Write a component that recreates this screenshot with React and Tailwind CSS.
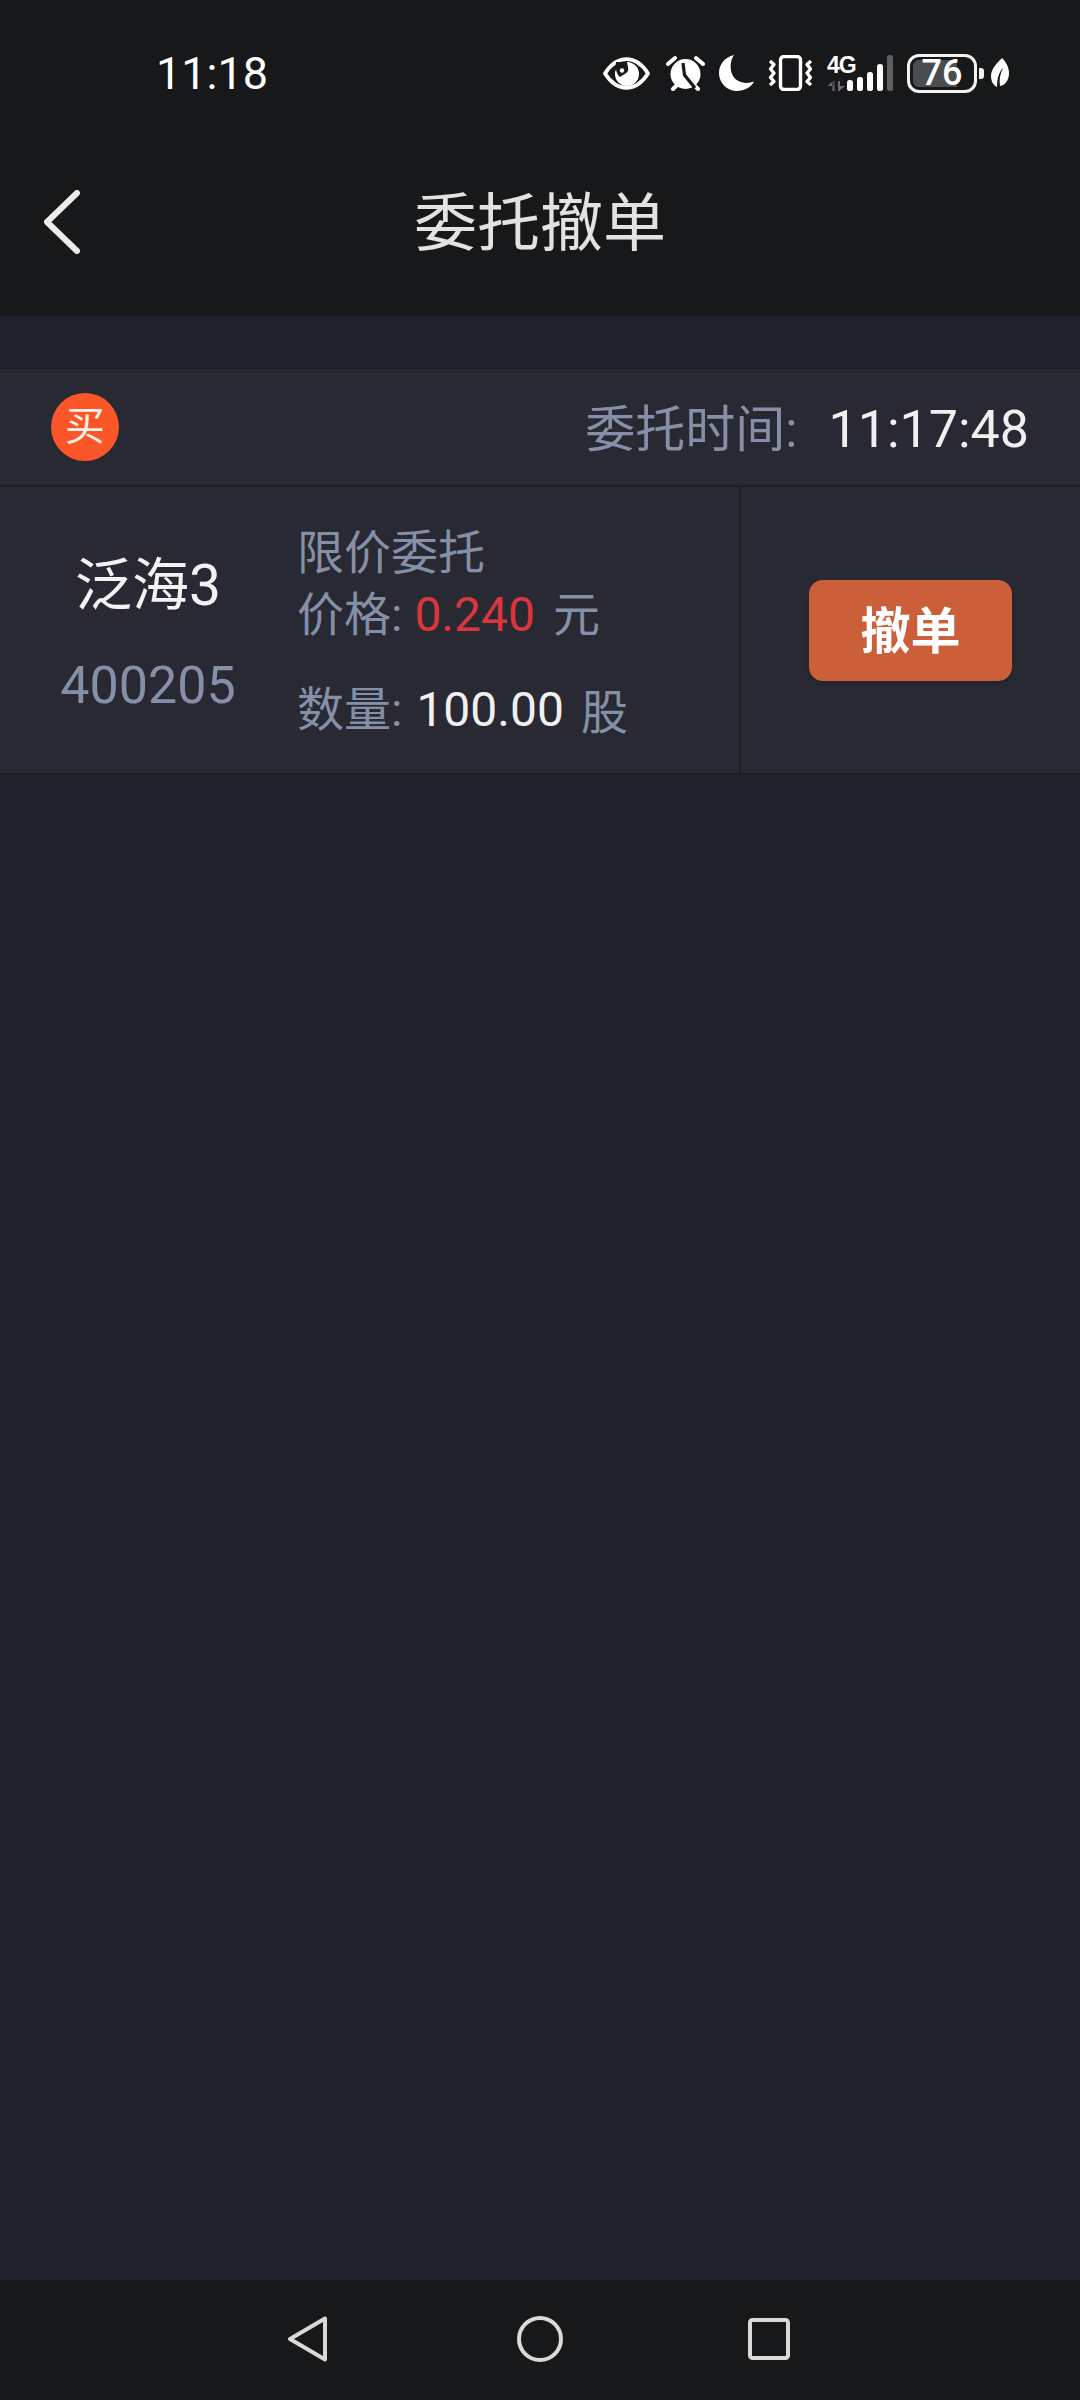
const FONT = "font-['Roboto','Noto_Sans_CJK_SC',sans-serif]";

function Eye() {
  return (
    <svg width="47" height="33" viewBox="0 0 47 33" className="shrink-0 mr-[2px]">
      <path d="M2 16.5 C8 7 15 2.2 23.5 2.2 C32 2.2 39 7 45 16.5 C39 26 32 30.8 23.5 30.8 C15 30.8 8 26 2 16.5 Z" fill="none" stroke="#fff" strokeWidth="3.8" strokeLinejoin="round" />
      <circle cx="24" cy="17" r="12" fill="#fff" />
      <path d="M13 5 H24 C24.5 9 26 12 25 14 C23 17 19 18 17 20 C14 18 12 12 13 5 Z" fill="#17181a" />
      <circle cx="19" cy="13.5" r="2.2" fill="#fff" />
      <path d="M5 14.5 C10 7 16 3.5 23.5 3.5 C31 3.5 37 7 42 14.5" fill="none" stroke="#fff" strokeWidth="0" />
    </svg>
  );
}

function Alarm() {
  return (
    <svg width="39" height="36" viewBox="0 0 39 36" className="shrink-0">
      <circle cx="19.5" cy="19" r="15" fill="#fff" />
      <path d="M2 9 L9 3 M37 9 L30 3" stroke="#fff" strokeWidth="4" strokeLinecap="round" />
      <path d="M7 34 L11 30 M32 34 L28 30" stroke="#fff" strokeWidth="4" strokeLinecap="round" />
      <path d="M17 8 L18.5 20 L29 33" fill="none" stroke="#17181a" strokeWidth="3.2" />
    </svg>
  );
}

function Moon() {
  return (
    <svg width="35" height="36" viewBox="0 0 35 36" className="shrink-0">
      <path d="M15 0 C9 9 11 24 22 27 C27 28.5 31 28 35 26.5 C32 32.5 25 36 18 36 C8 36 0 28 0 18 C0 9 6 2 15 0 Z" fill="#fff" />
    </svg>
  );
}

function Vibrate() {
  return (
    <svg width="45" height="36" viewBox="0 0 45 36" className="shrink-0">
      <rect x="12.5" y="1.5" width="20" height="33" rx="3.5" fill="none" stroke="#fff" strokeWidth="3.4" />
      <path d="M2 6 L6 9.5 L2.5 14 L6 18 L2.5 22.5 L6 26.5 L2 30" fill="none" stroke="#fff" strokeWidth="3.4" strokeLinejoin="round" />
      <path d="M43 6 L39 9.5 L42.5 14 L39 18 L42.5 22.5 L39 26.5 L43 30" fill="none" stroke="#fff" strokeWidth="3.4" strokeLinejoin="round" />
    </svg>
  );
}

function Signal() {
  return (
    <div className="relative w-[66px] h-[36px] shrink-0">
      <svg width="66" height="36" viewBox="0 0 66 36">
        <path d="M5.5 26 L5.5 36 H7.5 V26 Z M0.5 31 L6.5 25.5 V31 Z" fill="#6a6b6d" />
        <path d="M11 26 V36 H13 V26 Z M12 36 L18 31 H12 Z" fill="#6a6b6d" />
        <rect x="20" y="25" width="6" height="11" rx="2.5" fill="#fff" />
        <rect x="30" y="22" width="6" height="14" rx="2.5" fill="#fff" />
        <rect x="40" y="17" width="6" height="19" rx="2.5" fill="#fff" />
        <rect x="50" y="9" width="6" height="27" rx="2.5" fill="#fff" />
        <rect x="60" y="0" width="6" height="36" rx="2.5" fill="#5f6062" />
      </svg>
      <span className="absolute left-0 top-[-2px] text-[23px] leading-[24px] font-bold text-white font-['Liberation_Sans','Roboto',sans-serif] tracking-[-1px]">4G</span>
    </div>
  );
}

function Battery() {
  return (
    <div className="flex items-center gap-[2px] shrink-0">
      <div className="relative w-[70px] h-[39px] border-[3px] border-[#f2f2f2] rounded-[12px] p-[3px]">
        <div className="h-full w-[76%] bg-[#4b4c4e] rounded-l-[6px]" />
        <span className="absolute inset-0 flex items-center justify-center text-[36px] leading-none font-medium text-white">76</span>
      </div>
      <div className="w-[5px] h-[11px] bg-[#f2f2f2] rounded-r-[3px]" />
    </div>
  );
}

function Leaf() {
  return (
    <svg width="18" height="30" viewBox="0 0 18 30" className="shrink-0 -ml-[7px]">
      <path d="M11 0 C15 4 18 9 18 15 C18 21 15 27 9 28 C8 22 9 16 12 10 C8 14 6 20 6 29 C2 27 0 23 0 18 C0 11 6 5 11 0 Z" fill="#fff" />
    </svg>
  );
}

function BackChevron() {
  return (
    <svg width="38" height="64" viewBox="0 0 38 64" className="shrink-0">
      <path d="M34 3 L4 32 L34 61" fill="none" stroke="#ececec" strokeWidth="6" strokeLinecap="round" strokeLinejoin="round" />
    </svg>
  );
}

function NavBar() {
  return (
    <div className="h-[120px] bg-[#17181a] flex items-center justify-center pb-[3px] pr-[3px]">
      <svg width="42" height="46" viewBox="0 0 42 46">
        <path d="M3 23 L38 2.5 V43.5 Z" fill="none" stroke="#d9d9d9" strokeWidth="4" strokeLinejoin="round" />
      </svg>
      <svg width="46" height="46" viewBox="0 0 46 46" className="ml-[188px]">
        <circle cx="23" cy="23" r="21" fill="none" stroke="#d9d9d9" strokeWidth="4" />
      </svg>
      <svg width="42" height="42" viewBox="0 0 42 42" className="ml-[185px]">
        <rect x="2" y="2" width="38" height="38" rx="2.5" fill="none" stroke="#d9d9d9" strokeWidth="4" />
      </svg>
    </div>
  );
}

export default function App() {
  return (
    <div className={`${FONT} w-[1080px] h-[2400px] flex flex-col bg-[#20212b] overflow-hidden`}>
      <header className="h-[316px] shrink-0 bg-[#17181a] flex flex-col">
        <div className="h-[146px] flex items-center justify-between pl-[156px] pr-[71px]">
          <span className="text-[45px] leading-none text-white">11:18</span>
          <div className="flex items-center gap-[14px]">
            <Eye />
            <Alarm />
            <Moon />
            <Vibrate />
            <Signal />
            <Battery />
            <Leaf />
          </div>
        </div>
        <div className="relative flex items-center justify-center h-[150px] mt-[2px]">
          <div className="absolute left-[43px] top-[42px]"><BackChevron /></div>
          <h1 className="text-[63px] leading-none font-normal text-[#e2e2e2]">委托撤单</h1>
        </div>
      </header>

      <main className="flex-1 pt-[52px]">
        <section className="bg-[#282933] border-y border-[#1c1d25]">
          <div className="h-[118px] flex items-center justify-between pl-[51px] pr-[51px] border-b-2 border-[#1c1d25]">
            <span className="w-[68px] h-[68px] rounded-full bg-[#fa5628] flex items-center justify-center text-[40px] leading-none text-[#fdeee8]">买</span>
            <div className="flex items-center pt-[5px]">
              <span className="text-[50px] leading-none text-[#8590a6]">委托时间:</span>
              <span className="ml-[31px] text-[52px] leading-none text-[#f0f0f0]">11:17:48</span>
            </div>
          </div>
          <div className="h-[286px] flex">
            <div className="w-[741px] flex border-r-2 border-[#1c1d25]">
              <div className="w-[297px] flex flex-col items-center pt-[67px] pr-[1px]">
                <span className="text-[57px] leading-[64px] text-[#f2f2f2]">泛海3</span>
                <span className="mt-[38px] text-[52px] leading-[60px] text-[#8590a6]">400205</span>
              </div>
              <div className="flex flex-col pt-[35px] text-[47px] leading-[62px] text-[#8590a6]">
                <span>限价委托</span>
                <div className="flex items-center">
                  <span>价格:</span>
                  <span className="ml-[12px] text-[#d9363e] text-[48px]">0.240</span>
                  <span className="ml-[18px]">元</span>
                </div>
                <div className="flex items-center mt-[30px]">
                  <span>数量:</span>
                  <span className="ml-[14px] text-[#f0f0f0] text-[48px]">100.00</span>
                  <span className="ml-[17px] mt-[6px]">股</span>
                </div>
              </div>
            </div>
            <div className="flex-1 flex items-center justify-start pl-[68px]">
              <button className="w-[203px] h-[101px] rounded-[14px] bg-[#cb5f39] shadow-md text-[50px] leading-none font-bold text-white pt-[3px]">撤单</button>
            </div>
          </div>
        </section>
      </main>

      <NavBar />
    </div>
  );
}
